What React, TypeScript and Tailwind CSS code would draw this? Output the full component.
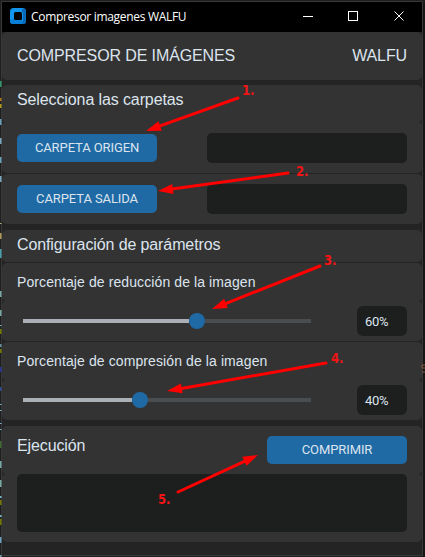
import React from "react";

const heading = "text-[16px] leading-5 tracking-[-0.11px] text-[#dce4ee] whitespace-nowrap";
const buttonStyle =
  "block h-7 w-[140px] rounded-[5px] bg-[#1f6aa5] text-center font-[Roboto,sans-serif] text-[13px] leading-7 tracking-[-0.1px] text-[#dce4ee]";

function FolderRow({ label }: { label: string }) {
  return (
    <div className="flex h-[30px] items-center justify-between">
      <button className={buttonStyle}>{label}</button>
      <div className="h-[30px] w-[200px] rounded-[5px] bg-[#1d1e1e]" />
    </div>
  );
}

function SliderPanel({ title, value, travel }: { title: string; value: number; travel: number }) {
  return (
    <section className="mt-px h-[78px] rounded-[5px] bg-[#333333] pr-[15px] pl-[15px] pt-[10px]">
      <h3 className="h-[33px] text-[14px] leading-[18px] tracking-[0.1px] whitespace-nowrap">{title}</h3>
      <div className="flex h-[30px] items-center justify-between pl-[6px]">
        <div className="flex h-4 w-[288px] items-center">
          <div className="h-1 bg-[#aab0b5]" style={{ width: travel }} />
          <div className="h-4 w-4 shrink-0 rounded-full bg-[#1f6aa5]" />
          <div className="h-1 flex-1 bg-[#4a4d50]" />
        </div>
        <div className="h-[30px] w-[50px] rounded-[6px] bg-[#1d1e1e] pl-2 font-[Roboto,sans-serif] text-[13px] leading-[31px] tracking-[-0.3px]">{value}%</div>
      </div>
    </section>
  );
}

/* Arrows run from (x1, y1) to the tip at (x2, y2). */
const notes = [
  { n: "1.", x: 242, y: 95, x1: 238, y1: 98, x2: 146, y2: 131 },
  { n: "2.", x: 296, y: 176, x1: 288, y1: 173, x2: 158, y2: 191 },
  { n: "3.", x: 324, y: 265, x1: 320, y1: 266, x2: 212, y2: 309 },
  { n: "4.", x: 331, y: 363, x1: 326, y1: 363, x2: 167, y2: 391 },
  { n: "5.", x: 158, y: 504, x1: 178, y1: 492, x2: 258, y2: 455 },
];

function Annotations() {
  return (
    <svg className="pointer-events-none absolute inset-0" width="425" height="557" fill="#ff0000">
      {notes.map(({ n, x, y, x1, y1, x2, y2 }) => {
        const length = Math.hypot(x2 - x1, y2 - y1);
        const angle = (Math.atan2(y2 - y1, x2 - x1) * 180) / Math.PI;
        return (
          <g key={n}>
            <g transform={`translate(${x1} ${y1}) rotate(${angle})`}>
              <line x1="0" y1="0" x2={length - 12} y2="0" stroke="#ff0000" strokeWidth="3" strokeLinecap="round" />
              <polygon points={`${length},0 ${length - 15},-5 ${length - 15},5`} />
            </g>
            <text x={x} y={y} fill="#f41414" className="font-['DejaVu_Sans',sans-serif] text-[13.5px] font-bold" textLength="12.5" lengthAdjust="spacingAndGlyphs">{n}</text>
          </g>
        );
      })}
    </svg>
  );
}

const slivers = [
  [81, 6, "#30966d"], [98, 3, "#ad7b16"], [104, 4, "#b49b19"], [119, 6, "#6ca0bb"], [138, 6, "#7aaac1"], [157, 6, "#6ca0bb"], [176, 6, "#7aaac1"],
  [223, 1, "#b4ad85"], [233, 6, "#b09a59"], [249, 9, "#4da1ab"], [291, 6, "#78aaa6"], [310, 6, "#78aaa6"], [325, 1, "#78b9cc"], [329, 5, "#747900"],
  [344, 3, "#68929e"], [349, 4, "#747900"], [367, 5, "#2a369b"], [387, 4, "#2d4d95"], [404, 1, "#78b9cc"], [410, 1, "#78b9cc"], [423, 1, "#78b9cc"], [429, 1, "#78b9cc"], [441, 7, "#416b35"],
  [461, 7, "#78aaa6"], [480, 7, "#78aaa6"], [496, 2, "#78b9cc"], [500, 5, "#747900"], [515, 2, "#78b9cc"], [519, 6, "#747900"], [537, 6, "#6ca0bb"], [555, 2, "#729eaa"],
] as const;

export default function App() {
  return (
    <main className="relative h-[557px] w-[425px] overflow-hidden bg-[#1e1e1e] pt-px pl-px font-['Liberation_Sans',Arial,sans-serif] text-[#dce4ee]">
      <div className="h-[555px] w-[422px] border border-[#383838] bg-[#242424]">
        <header className="flex h-[30px] items-center bg-black pl-2 text-white">
          <svg width="16" height="16" viewBox="0 0 16 16" className="mb-[2px] shrink-0">
            <rect width="16" height="16" rx="3.5" fill="#1094ed" />
            <path d="M12 1v3l1 1v7l-2 4h2a3 3 0 0 0 3-3V3.500a3 3 0 0 0-4-2.500" fill="#0869b7" />
            <path d="M0 12l4-1 2 1h6l1 4H3a3 3 0 0 1-3-4" fill="#087ed6" />
            <rect x="4" y="4" width="8" height="8" rx="1.500" fill="#000" />
          </svg>
          <span className="ml-[5px] font-['Open_Sans',sans-serif] text-[12px] leading-4 tracking-[-0.31px] whitespace-nowrap">Compresor imagenes WALFU</span>
          <svg className="ml-auto" width="119" height="30" viewBox="0 0 119 30" fill="none" stroke="white">
            <path d="M0 14.500h10M45.500 9.500h9v9h-9z" shapeRendering="crispEdges" />
            <path d="m91.500 9.500 9 9m0-9-9 9" />
          </svg>
        </header>
        <section className="flex h-12 items-center justify-between rounded-[5px] bg-[#333333] px-[15px]">
          <h1 className={heading}>COMPRESOR DE IMÁGENES</h1>
          <span className={heading}>WALFU</span>
        </section>
        <section className="mt-[5px] h-[88px] rounded-[5px] bg-[#333333] px-[15px] pt-[5px]">
          <h2 className={`${heading} h-[43px]`}>Selecciona las carpetas</h2>
          <FolderRow label="CARPETA ORIGEN" />
        </section>
        <section className="mt-px flex h-[50px] flex-col justify-center rounded-[5px] bg-[#333333] px-[15px]">
          <FolderRow label="CARPETA SALIDA" />
        </section>
        <section className="mt-[6px] h-8 rounded-[5px] bg-[#333333] px-[15px] pt-[5px]">
          <h2 className={heading}>Configuración de parámetros</h2>
        </section>
        <SliderPanel title="Porcentaje de reducción de la imagen" value={60} travel={166} />
        <SliderPanel title="Porcentaje de compresión de la imagen" value={40} travel={109} />
        <section className="mt-[6px] h-[116px] rounded-[5px] bg-[#333333] px-[15px] pt-[10px]">
          <div className="flex h-[38px] items-start justify-between">
            <h2 className={heading}>Ejecución</h2>
            <button className={buttonStyle}>COMPRIMIR</button>
          </div>
          <div className="h-[58px] rounded-[5px] bg-[#1d1e1e]" />
        </section>
      </div>
      <svg className="absolute inset-0" width="425" height="557">
        {slivers.map(([y, height, color]) => <rect key={y} x="0" y={y} width="1.5" height={height} fill={color} />)}
        <rect x="423" y="2" width="2" height="555" fill="#151515" />
        <path d="M425 365h-3v3h3m-3 4h3" stroke="#8b5b45" fill="none" />
        {[122, 301, 380, 474].map((y) => (
          <g key={y} fill="#292929"><path d={`M2 ${y - 3}l3 3-3 3z`} /><path d={`M422 ${y - 3}l-3 3 3 3z`} /></g>
        ))}
      </svg>
      <Annotations />
    </main>
  );
}
